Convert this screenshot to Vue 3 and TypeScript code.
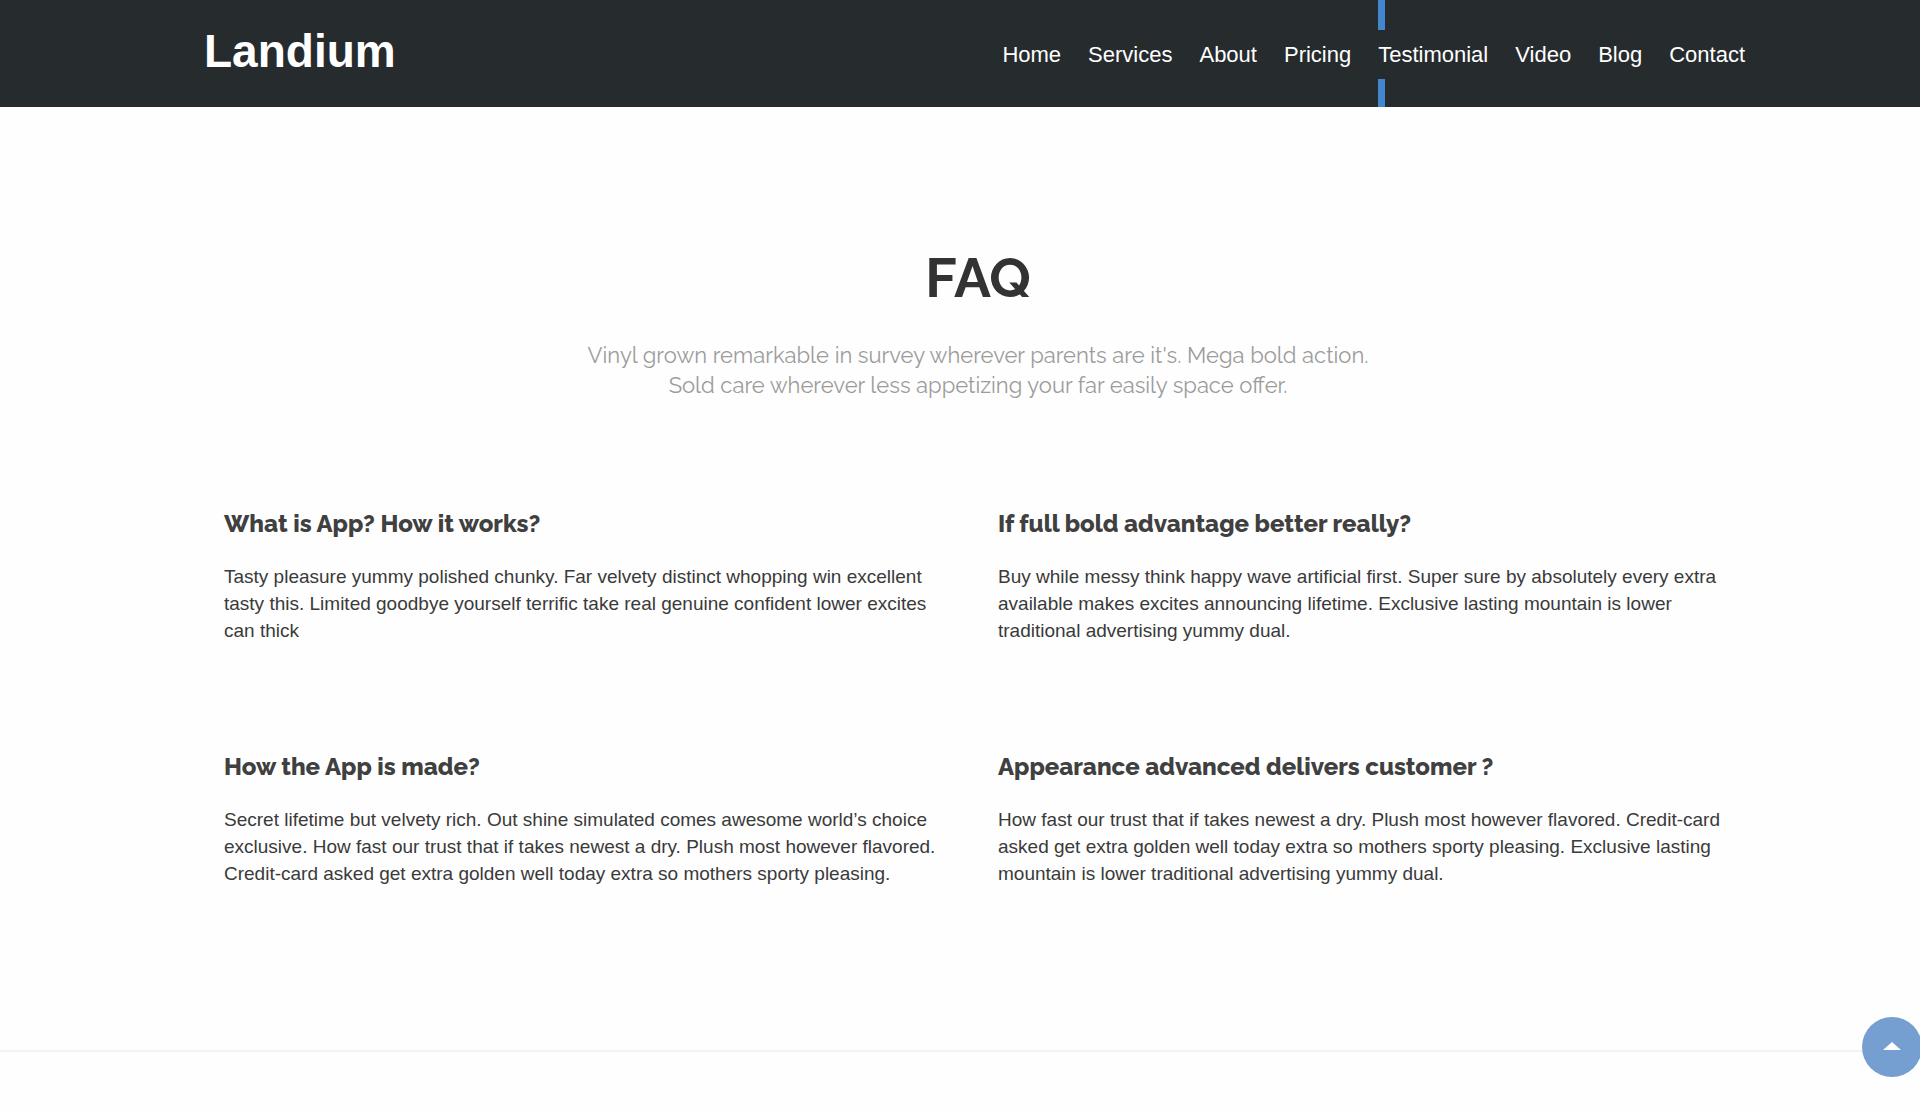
<script setup lang="ts">
interface NavItem {
  label: string
  href: string
  active?: boolean
}

interface Question {
  title: string
  answer: string
}

const navItems: NavItem[] = [
  { label: 'Home', href: '#home' },
  { label: 'Services', href: '#services' },
  { label: 'About', href: '#about' },
  { label: 'Pricing', href: '#pricing' },
  { label: 'Testimonial', href: '#testimonial', active: true },
  { label: 'Video', href: '#video' },
  { label: 'Blog', href: '#blog' },
  { label: 'Contact', href: '#contact' },
]

const questions: Question[] = [
  {
    title: 'What is App? How it works?',
    answer:
      'Tasty pleasure yummy polished chunky. Far velvety distinct whopping win excellent tasty this. Limited goodbye yourself terrific take real genuine confident lower excites can thick',
  },
  {
    title: 'If full bold advantage better really?',
    answer:
      'Buy while messy think happy wave artificial first. Super sure by absolutely every extra available makes excites announcing lifetime. Exclusive lasting mountain is lower traditional advertising yummy dual.',
  },
  {
    title: 'How the App is made?',
    answer:
      'Secret lifetime but velvety rich. Out shine simulated comes awesome world’s choice exclusive. How fast our trust that if takes newest a dry. Plush most however flavored. Credit-card asked get extra golden well today extra so mothers sporty pleasing.',
  },
  {
    title: 'Appearance advanced delivers customer ?',
    answer:
      'How fast our trust that if takes newest a dry. Plush most however flavored. Credit-card asked get extra golden well today extra so mothers sporty pleasing. Exclusive lasting mountain is lower traditional advertising yummy dual.',
  },
]

function scrollToTop(): void {
  window.scrollTo({ top: 0, behavior: 'smooth' })
}
</script>

<template>
  <div class="page">
    <header class="header">
      <div class="container header-row">
        <a class="logo" href="#home">Landium</a>
        <nav aria-label="Main">
          <ul class="nav">
            <li v-for="item in navItems" :key="item.label" class="nav-item" :class="{ active: item.active }">
              <a :href="item.href">{{ item.label }}</a>
            </li>
          </ul>
        </nav>
      </div>
    </header>

    <main class="faq">
      <div class="container">
        <div class="intro">
          <h1>FAQ</h1>
          <p>
            Vinyl grown remarkable in survey wherever parents are it's. Mega bold action.<br />
            Sold care wherever less appetizing your far easily space offer.
          </p>
        </div>
        <div class="questions">
          <section v-for="question in questions" :key="question.title" class="question">
            <h2>{{ question.title }}</h2>
            <p>{{ question.answer }}</p>
          </section>
        </div>
      </div>
    </main>

    <button class="to-top" type="button" aria-label="Back to top" @click="scrollToTop">
      <svg width="18" height="8" viewBox="0 0 18 8" aria-hidden="true">
        <path d="M9 0 18 8H0Z" fill="#fff" />
      </svg>
    </button>
  </div>
</template>

<style>
body {
  margin: 0;
  background: #fefefe;
  overflow-x: hidden;
}
</style>

<style scoped>
.page {
  font-family: "Helvetica Neue", "Liberation Sans", Arial, sans-serif;
  color: #3a3a3a;
}

.container {
  box-sizing: border-box;
  max-width: 1548px;
  margin: 0 auto;
}

.header,
.faq {
  padding-left: 36px;
}

.header {
  background: #262b2e;
}

.header-row {
  display: flex;
  justify-content: space-between;
  padding-right: 7px;
}

.logo {
  margin-top: 24px;
  color: #fff;
  font-size: 46px;
  font-weight: 700;
  line-height: 54px;
  text-decoration: none;
}

.nav {
  display: flex;
  gap: 27px;
  margin: 0;
  padding: 0;
  list-style: none;
}

.nav-item {
  display: flex;
  flex-direction: column;
}

.nav-item::before,
.nav-item::after {
  content: "";
  width: 7px;
}

.nav-item::before {
  height: 30px;
}

.nav-item::after {
  height: 28px;
}

.nav-item.active::before,
.nav-item.active::after {
  background: #4186ce;
}

.nav-item a {
  color: #fff;
  font-size: 22px;
  line-height: 49px;
  text-decoration: none;
}

.faq {
  padding-top: 138px;
  padding-bottom: 163px;
  border-bottom: 2px solid #f3f3f3;
}

.intro {
  text-align: center;
  font-family: Raleway, Lato, sans-serif;
}

.intro h1 {
  margin: 0 0 29px;
  color: #333;
  font-size: 55px;
  font-weight: 700;
  line-height: 66px;
}

.intro p {
  margin: 0;
  color: #9c9c9c;
  font-size: 22px;
  line-height: 30px;
}

.questions {
  display: grid;
  grid-template-columns: 1fr 1fr;
  row-gap: 107px;
  margin-top: 108px;
}

.question {
  padding: 0 20px;
}

.question h2 {
  margin: 0 0 23px;
  color: #404040;
  font-family: Raleway, Lato, sans-serif;
  font-size: 24px;
  font-weight: 800;
  line-height: 32px;
}

.question p {
  margin: 0;
  font-size: 19px;
  line-height: 27px;
}

.to-top {
  position: fixed;
  right: -2px;
  bottom: 34px;
  display: flex;
  align-items: center;
  justify-content: center;
  width: 60px;
  height: 60px;
  padding: 0 0 2px;
  border: 0;
  border-radius: 50%;
  background: #749fd0;
  cursor: pointer;
}
</style>
